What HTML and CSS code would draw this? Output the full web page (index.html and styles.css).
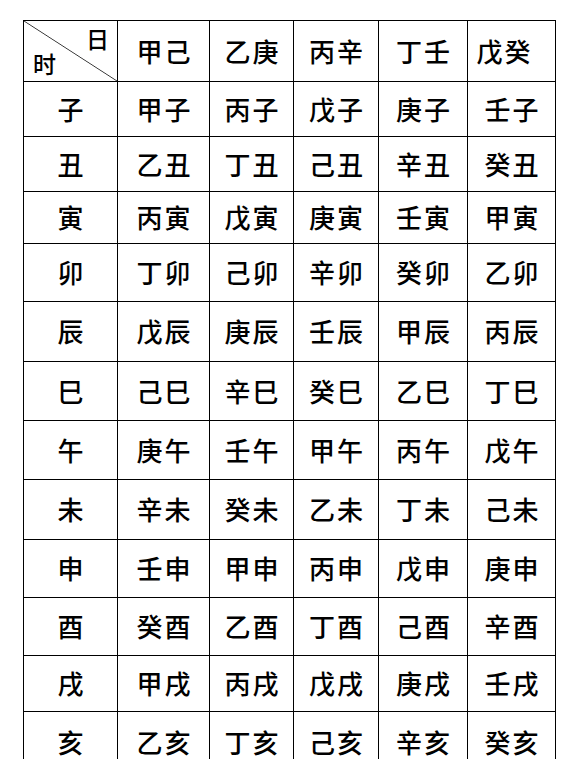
FILE: index.html
```html
<!DOCTYPE html>
<html lang="zh">
<head>
<meta charset="utf-8">
<title>日上起时表</title>
<link rel="stylesheet" href="styles.css">
</head>
<body>
<div class="grid">
  <div class="cell corner"><span class="day">日</span><span class="hour">时</span></div>
  <div class="cell">甲己</div><div class="cell">乙庚</div><div class="cell">丙辛</div><div class="cell">丁壬</div><div class="cell shift-l">戊癸</div>

  <div class="cell">子</div><div class="cell">甲子</div><div class="cell">丙子</div><div class="cell">戊子</div><div class="cell">庚子</div><div class="cell">壬子</div>
  <div class="cell">丑</div><div class="cell">乙丑</div><div class="cell">丁丑</div><div class="cell">己丑</div><div class="cell">辛丑</div><div class="cell">癸丑</div>
  <div class="cell">寅</div><div class="cell">丙寅</div><div class="cell">戊寅</div><div class="cell">庚寅</div><div class="cell">壬寅</div><div class="cell">甲寅</div>
  <div class="cell">卯</div><div class="cell">丁卯</div><div class="cell">己卯</div><div class="cell">辛卯</div><div class="cell">癸卯</div><div class="cell">乙卯</div>
  <div class="cell">辰</div><div class="cell">戊辰</div><div class="cell">庚辰</div><div class="cell">壬辰</div><div class="cell">甲辰</div><div class="cell">丙辰</div>
  <div class="cell">巳</div><div class="cell">己巳</div><div class="cell">辛巳</div><div class="cell">癸巳</div><div class="cell">乙巳</div><div class="cell">丁巳</div>
  <div class="cell">午</div><div class="cell">庚午</div><div class="cell">壬午</div><div class="cell">甲午</div><div class="cell">丙午</div><div class="cell">戊午</div>
  <div class="cell">未</div><div class="cell">辛未</div><div class="cell">癸未</div><div class="cell">乙未</div><div class="cell">丁未</div><div class="cell">己未</div>
  <div class="cell">申</div><div class="cell">壬申</div><div class="cell">甲申</div><div class="cell">丙申</div><div class="cell">戊申</div><div class="cell">庚申</div>
  <div class="cell">酉</div><div class="cell">癸酉</div><div class="cell">乙酉</div><div class="cell">丁酉</div><div class="cell">己酉</div><div class="cell">辛酉</div>
  <div class="cell">戌</div><div class="cell">甲戌</div><div class="cell">丙戌</div><div class="cell">戊戌</div><div class="cell">庚戌</div><div class="cell">壬戌</div>
  <div class="cell">亥</div><div class="cell">乙亥</div><div class="cell">丁亥</div><div class="cell">己亥</div><div class="cell">辛亥</div><div class="cell">癸亥</div>
</div>
</body>
</html>
```

FILE: styles.css
```css
html, body {
  margin: 0;
  background: #ffffff;
}

body {
  padding: 20px 0 0 23px;
  overflow: hidden;
  font-family: "Noto Sans CJK SC", "Noto Sans CJK JP", sans-serif;
  color: #000;
}

.grid {
  display: grid;
  width: max-content;
  grid-template-columns: 93px 91px 83px 84px 88px 87px;
  grid-template-rows: 60px 54px 54px 51px 57px 59px 58px 58px 59px 57px 57px 55px 60px;
  gap: 1px;
  padding: 1px;
  background: #000;
}

.cell {
  background: #fff;
  display: flex;
  align-items: center;
  justify-content: center;
  font-size: 26px;
  font-weight: 500;
  line-height: 1;
  letter-spacing: 2px;
  padding-left: 2px;
  padding-bottom: 1px;
}

.shift-l {
  padding-left: 0;
  padding-right: 14px;
}

.corner {
  flex-direction: column;
  align-items: stretch;
  justify-content: space-between;
  padding: 6px 8px 6px 9px;
  font-size: 23px;
  letter-spacing: 0;
  background: linear-gradient(to top right, #fff calc(50% - 0.8px), #333 50%, #fff calc(50% + 0.8px));
}

.day {
  align-self: flex-end;
}

.hour {
  align-self: flex-start;
}
```
